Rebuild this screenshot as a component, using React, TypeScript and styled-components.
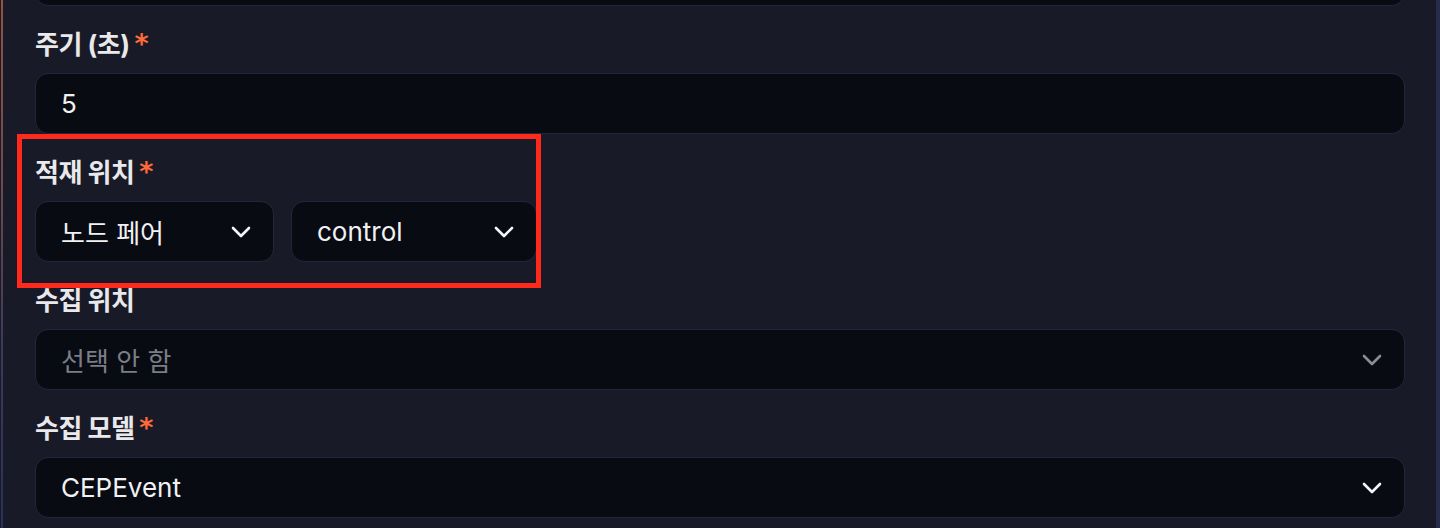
import React from "react";
import styled, { createGlobalStyle } from "styled-components";

const GlobalStyle = createGlobalStyle`
  html, body { margin: 0; padding: 0; background: #181b27; }
  body { overflow: hidden; font-family: Inter, "Noto Sans CJK KR", sans-serif; }
  * { box-sizing: border-box; }
`;

const Frame = styled.div`
  position: relative;
  width: 1440px;
  height: 528px;
  overflow: hidden;
  background: #181b27;
  border-right: 4px solid #272c4b;
  padding-left: 35px;
  padding-right: 31px;
  &::before {
    content: "";
    position: absolute;
    left: 1px;
    top: 0;
    bottom: 0;
    width: 2px;
    background: linear-gradient(180deg, #94533f 0%, #6e4a4e 35%, #3e3a58 65%, #2b3058 100%);
  }
`;

const Form = styled.div`
  display: flex;
  flex-direction: column;
  margin-top: -55px;
`;

const Field = styled.div`
  display: flex;
  flex-direction: column;
  margin-bottom: 18px;
`;

const Label = styled.div`
  display: flex;
  align-items: center;
  height: 36px;
  margin-bottom: 13px;
  font-family: Inter, "Noto Sans CJK KR", sans-serif;
  font-size: 26px;
  font-weight: 700;
  color: #e9e9ec;
`;

const LabelText = styled.span`
  letter-spacing: -0.5px;
  white-space: pre;
`;

const Required = styled.span`
  color: #ff6a3c;
  margin-left: 5px;
  font-family: "DejaVu Sans", sans-serif;
  font-size: 27px;
  font-weight: 700;
  line-height: 1;
  position: relative;
  top: 1px;
`;

const Box = styled.div<{ $placeholder?: boolean }>`
  display: flex;
  align-items: center;
  justify-content: space-between;
  height: 61px;
  padding: 0 22px 0 25px;
  background: #080b12;
  border: 1px solid #23273a;
  border-radius: 13px;
  font-family: Inter, "Noto Sans CJK KR", sans-serif;
  font-size: 26px;
  font-weight: 400;
  color: ${(p) => (p.$placeholder ? "#7b7e87" : "#f1f1f3")};
`;

const Row = styled.div`
  display: grid;
  grid-template-columns: 239px 246px;
  gap: 17px;
`;

const Chevron = styled.svg<{ $muted?: boolean }>`
  width: 20px;
  height: 12px;
  flex: none;
  color: ${(p) => (p.$muted ? "#8b8d93" : "#f4f4f6")};
`;

const Highlight = styled.div`
  position: absolute;
  left: 17px;
  top: 134px;
  width: 524px;
  height: 154px;
  border: 5px solid #ff2a1c;
  pointer-events: none;
`;

const Arrow = ({ muted }: { muted?: boolean }) => (
  <Chevron $muted={muted} viewBox="0 0 20 12" fill="none">
    <path d="M2 2 L10 10 L18 2" stroke="currentColor" strokeWidth="2.6" strokeLinecap="round" strokeLinejoin="round" />
  </Chevron>
);

const Select = ({ value, placeholder }: { value: string; placeholder?: boolean }) => (
  <Box $placeholder={placeholder}>
    <span>{value}</span>
    <Arrow muted={placeholder} />
  </Box>
);

const FieldLabel = ({ text, required }: { text: string; required?: boolean }) => (
  <Label>
    <LabelText>{text}</LabelText>
    {required && <Required>*</Required>}
  </Label>
);

export default function App() {
  return (
    <>
      <GlobalStyle />
      <Frame>
        <Form>
          <Field>
            <Box />
          </Field>
          <Field>
            <FieldLabel text="주기 (초)" required />
            <Box>5</Box>
          </Field>
          <Field>
            <FieldLabel text="적재 위치" required />
            <Row>
              <Select value="노드 페어" />
              <Select value="control" />
            </Row>
          </Field>
          <Field>
            <FieldLabel text="수집 위치" />
            <Select value="선택 안 함" placeholder />
          </Field>
          <Field>
            <FieldLabel text="수집 모델" required />
            <Select value="CEPEvent" />
          </Field>
        </Form>
        <Highlight />
      </Frame>
    </>
  );
}
